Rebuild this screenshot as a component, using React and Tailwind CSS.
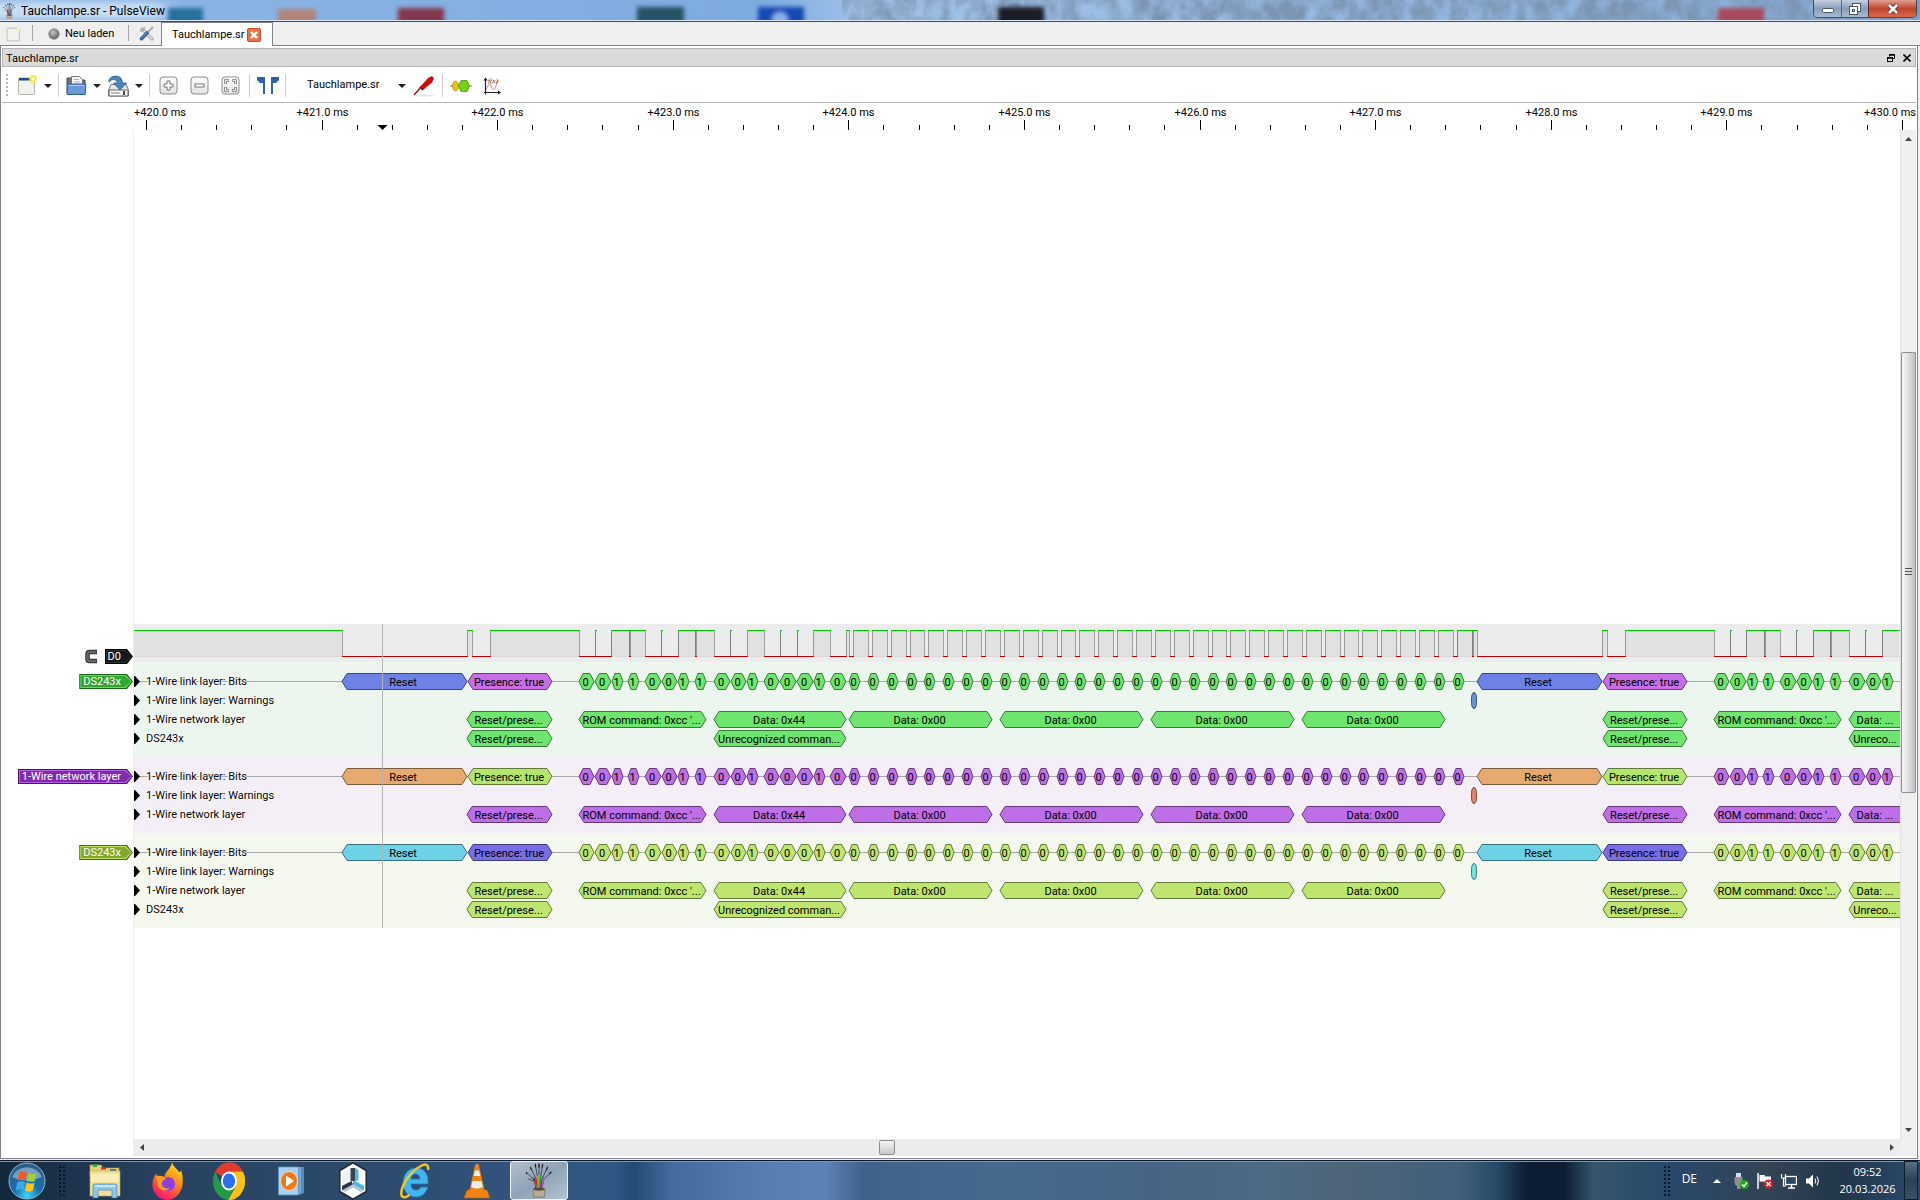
import React from "react";

/* ---------- capture data (pixels along the time axis, 0 = left edge of the view) ---------- */

const ZERO_BITS = Array.from({ length: 33 }, (_, k) => Math.round(715 + 18.87 * k));
const REPEAT = 1135;

const LEVELS = (() => {
  const packet = [
    [333, 338], [356, 445], [461, 462], [477, 495], [496, 511], [527, 528],
    [544, 561], [562, 580], [596, 597], [613, 630], [646, 647], [663, 664], [679, 696], [712, 715],
  ];
  const highs = [[0, 208], ...packet];
  ZERO_BITS.forEach((x, k) => highs.push([x + 4, k < 32 ? ZERO_BITS[k + 1] : 1338]));
  highs.push([1339, 1343]);
  packet.forEach(([a, b]) => {
    if (a + REPEAT < 1765) highs.push([a + REPEAT, Math.min(b + REPEAT, 1765)]);
  });
  return highs;
})();

const COMMAND_BITS = [
  [445, 460, "0"], [461, 477, "0"], [478, 489, "1"], [494, 505, "1"], [511, 527, "0"], [528, 543, "0"],
  [544, 555, "1"], [561, 572, "1"], [580, 596, "0"], [597, 612, "0"], [613, 624, "1"], [630, 645, "0"],
  [646, 662, "0"], [663, 679, "0"], [680, 691, "1"], [696, 712, "0"],
];

const BITS = [
  ...COMMAND_BITS,
  ...ZERO_BITS.map((x) => [x, x + 11, "0"]),
  ...COMMAND_BITS.slice(0, 11).map(([a, b, t]) => [a + REPEAT, b + REPEAT, t]),
];

const NETWORK = [
  [333, 418, "Reset/prese..."],
  [445, 572, "ROM command: 0xcc '..."],
  [580, 712, "Data: 0x44"],
  [715, 858, "Data: 0x00"],
  [866, 1009, "Data: 0x00"],
  [1017, 1160, "Data: 0x00"],
  [1168, 1311, "Data: 0x00"],
  [1469, 1553, "Reset/prese..."],
  [1580, 1707, "ROM command: 0xcc '..."],
  [1715, 1780, "Data: ...", 1741],
];

const DEVICE = [
  [333, 418, "Reset/prese..."],
  [580, 712, "Unrecognized comman..."],
  [1469, 1553, "Reset/prese..."],
  [1715, 1780, "Unreco...", 1741],
];

const DECODERS = [
  {
    name: "DS243x", band: "bg-[#edf6ee]", tagEdge: "bg-[#176317]", tagRim: "bg-[#5fe05f]", tagFill: "bg-[#30a530]",
    bits: ["#6ee66e", "#3a7a3a"], reset: ["#6e82e6", "#3a457a"], presence: ["#c86ee6", "#6a3a7a"], warning: ["#6496dc", "#35507a"], device: true,
  },
  {
    name: "1-Wire network layer", band: "bg-[#f4eef7]", tagEdge: "bg-[#4a1268]", tagRim: "bg-[#b860e6]", tagFill: "bg-[#832aac]",
    bits: ["#be6ee6", "#643a7a"], reset: ["#e6aa6e", "#7a5a3a"], presence: ["#b4e66e", "#607a3a"], warning: ["#e6826e", "#7a453a"], device: false,
  },
  {
    name: "DS243x", band: "bg-[#f5f8ee]", tagEdge: "bg-[#4c6414]", tagRim: "bg-[#c0e860]", tagFill: "bg-[#84a62e]",
    bits: ["#bee66e", "#647a3a"], reset: ["#6ed2e6", "#3a707a"], presence: ["#786ee6", "#403a7a"], warning: ["#6ee6dc", "#3a7a75"], device: true,
  },
];

/* ---------- trace view ---------- */

function Block({ a, b, text, colors, textX }) {
  const s = Math.min(5, (b - a) * 0.27);
  const pts = `${a},9.5 ${a + s},1.5 ${b - s},1.5 ${b},9.5 ${b - s},17.5 ${a + s},17.5`;
  return (
    <g>
      <polygon points={pts} fill={colors[0]} stroke={colors[1]} />
      {text && (
        <text x={textX ?? (a + b) / 2 - 1} y="14" textAnchor="middle" className="fill-black text-[11px]">{text}</text>
      )}
    </g>
  );
}

function Row({ label, children }) {
  return (
    <div className="grid h-[19px]">
      <svg className="col-start-1 row-start-1 h-[19px] w-full overflow-hidden" aria-hidden={!children}>
        {children}
        <polygon points="0,4 1,4 6,9.5 1,15 0,15" fill="#000" />
      </svg>
      <span className="z-10 col-start-1 row-start-1 justify-self-start pl-3 leading-[19px] [text-shadow:0_0_1px_#fff,0_0_2px_#fff,1px_0_1px_#fff,-1px_0_1px_#fff]">
        {label}
      </span>
    </div>
  );
}

function DecoderBand({ d }) {
  return (
    <section className={`pt-[10px] pb-[9px] ${d.band}`}>
      <Row label="1-Wire link layer: Bits">
        <line x1="0" x2="100%" y1="9.5" y2="9.5" stroke="#a8aaa8" />
        <Block a={208} b={333} text="Reset" colors={d.reset} textX={269} />
        <Block a={334} b={418} text="Presence: true" colors={d.presence} />
        {BITS.map(([a, b, t]) => <Block key={a} a={a} b={b} text={t} colors={d.bits} />)}
        <Block a={1343} b={1468} text="Reset" colors={d.reset} textX={1404} />
        <Block a={1469} b={1553} text="Presence: true" colors={d.presence} />
      </Row>
      <Row label="1-Wire link layer: Warnings">
        <rect x="1337.5" y="1.5" width="5" height="16" rx="2.5" ry="6" fill={d.warning[0]} stroke={d.warning[1]} />
      </Row>
      <Row label="1-Wire network layer">
        {NETWORK.map(([a, b, t, x]) => <Block key={a} a={a} b={b} text={t} textX={x} colors={d.bits} />)}
      </Row>
      {d.device && (
        <Row label="DS243x">
          {DEVICE.map(([a, b, t, x]) => <Block key={a} a={a} b={b} text={t} textX={x} colors={d.bits} />)}
        </Row>
      )}
    </section>
  );
}

function LogicTrace() {
  return (
    <svg className="block h-[38px] w-full bg-[#ececec]" aria-label="D0">
      <line x1="0" x2="100%" y1="32.5" y2="32.5" stroke="#d8d8d8" />
      {LEVELS.map(([a, b], i) => {
        const next = LEVELS[i + 1];
        const gap = next ? next[0] - b : 0;
        return (
          <g key={a}>
            {b - a > 1.5 && <rect x={a} y="7" width={b - a} height="25" fill="#e1e1e1" />}
            {next && <line x1={b} x2={next[0] + 1} y1="32.5" y2="32.5" stroke="#c00000" />}
            {a > 0 && <line x1={a + 0.5} x2={a + 0.5} y1="6" y2="32" stroke={gap <= 1 || b - a < 2 ? "#808080" : "#989898"} />}
            {b < 1765 && b - a > 1.5 && <line x1={b + 0.5} x2={b + 0.5} y1="6" y2="32" stroke={gap <= 1 ? "#808080" : "#a0a0a0"} />}
            <line x1={a} x2={b + 1} y1="6.5" y2="6.5" stroke="#00c800" />
          </g>
        );
      })}
    </svg>
  );
}

const tagShape = "[clip-path:polygon(0_0,calc(100%-6px)_0,100%_50%,calc(100%-6px)_100%,0_100%)]";

function Tag({ edge, rim, fill, children, pad = "pl-0.5 pr-[10px]" }) {
  return (
    <button className={`p-px ${edge} ${tagShape}`}>
      <span className={`block p-px ${rim} ${tagShape}`}>
        <span className={`block h-[11px] leading-[12px] text-white ${fill} ${pad} ${tagShape}`}>{children}</span>
      </span>
    </button>
  );
}

function TagColumn() {
  return (
    <div className="flex w-[132px] shrink-0 flex-col items-end border-r border-[#f0f0f0]">
      <div className="grow-[494] basis-0" />
      <div className="flex h-[38px] items-start gap-[7px] pt-[25px]">
        <svg className="h-[15px] w-[14px]" viewBox="0 0 14 15">
          <path d="M13 3H5.500Q3.500 3 3.500 5v5Q3.500 12 5.500 12H13" fill="none" stroke="#2c2c2c" strokeWidth="4.500" />
          <path d="M12.500 3H5.500Q3.500 3 3.500 5v5Q3.500 12 5.500 12H12.500" fill="none" stroke="#666" strokeWidth="2.500" />
        </svg>
        <Tag edge="bg-black" rim="bg-[#2a2f2f]" fill="bg-[#14181a]" pad="pl-px pr-[10px]">D0</Tag>
      </div>
      {DECODERS.map((d, i) => (
        <div key={i} className={`flex items-start pt-[12px] ${d.device ? "h-[95px]" : "h-[76px]"}`}>
          <Tag edge={d.tagEdge} rim={d.tagRim} fill={d.tagFill}>{d.name}</Tag>
        </div>
      ))}
      <div className="grow-[211] basis-0" />
      <div className="h-[17px]" />
    </div>
  );
}

function Ruler() {
  const majors = Array.from({ length: 11 }, (_, i) => i);
  return (
    <svg className="ml-[132px] block h-[27px] w-[calc(100%-132px)] shrink-0" aria-label="Time scale">
      {majors.map((i) => {
        const x = Math.round(11.9 + i * 175.6) + 0.5;
        const tx = i === 0 ? 26 : i === 10 ? 1756 : x;
        return (
          <g key={i}>
            <text x={tx} y="13" textAnchor="middle" className="fill-black text-[11px]">{`+${420 + i}.0 ms`}</text>
            <line x1={x} x2={x} y1="17" y2="27" stroke="#000" />
            {i < 10 && [1, 2, 3, 4].map((m) => {
              const mx = Math.round(11.9 + i * 175.6 + m * 35.12) + 0.5;
              return <line key={m} x1={mx} x2={mx} y1="22" y2="27" stroke="#000" />;
            })}
          </g>
        );
      })}
      <polygon points="243.500,22 253.500,22 248.500,27" fill="#000" />
    </svg>
  );
}

/* ---------- small controls ---------- */

const Caret = () => (
  <svg className="h-1 w-2" viewBox="0 0 8 4"><polygon points="0,0 8,0 4,4" fill="#222" /></svg>
);
const MenuArrow = ({ label }) => (
  <button aria-label={label} className="flex w-[14px] items-center justify-center"><Caret /></button>
);
const ToolButton = ({ label, width = "w-7", children }) => (
  <button aria-label={label} className={`flex items-center justify-center ${width}`}>{children}</button>
);
const Sep = () => <span className="mx-[3px] my-[5px] w-px bg-[#cfcfcf]" />;

function RoundedTool({ children }) {
  return (
    <svg className="h-[19px] w-[19px]" viewBox="0 0 19 19">
      <defs>
        <linearGradient id="btnface" x2="0" y2="1"><stop offset="0" stopColor="#fff" /><stop offset="1" stopColor="#e2e2de" /></linearGradient>
      </defs>
      <rect x="1" y="1" width="17" height="17" rx="3" fill="url(#btnface)" stroke="#8c8c88" />
      {children}
    </svg>
  );
}

function NewIcon({ className, faded }) {
  return (
    <svg className={className} viewBox="0 0 21 21">
      <rect x="1.500" y="3" width="16" height="16.500" rx="1" fill="#f1f1ee" stroke="#b4b4b0" />
      {!faded && <rect x="2" y="3" width="15" height="2.500" fill="#204a87" />}
      <circle cx="16" cy="4" r={faded ? 2.6 : 4} fill="#f6ea3a" opacity={faded ? 0.5 : 0.85} />
      <circle cx="16" cy="4" r="1.800" fill="#fffde0" />
    </svg>
  );
}

/* ---------- window chrome ---------- */

function TitleBar() {
  return (
    <header className="relative flex h-[22px] shrink-0 items-start justify-between overflow-hidden border-b border-[#404a60] bg-[#84b0e2]">
      <svg className="absolute inset-0 h-full w-full" preserveAspectRatio="none" viewBox="0 0 1920 21" aria-hidden>
        <defs>
          <filter id="soft" x="-20%" y="-50%" width="140%" height="200%"><feGaussianBlur stdDeviation="2" /></filter>
          <filter id="wide" x="-20%" y="-50%" width="140%" height="200%"><feGaussianBlur stdDeviation="10 3" /></filter>
          <filter id="ice" x="0" y="0" width="100%" height="100%">
            <feTurbulence type="fractalNoise" baseFrequency="0.06 0.045" numOctaves="3" seed="4" />
            <feColorMatrix values="0 0 0 0 0.2  0 0 0 0 0.3  0 0 0 0 0.45  2.2 0 0 0 -0.6" />
          </filter>
          <linearGradient id="sky"><stop offset="0" stopColor="#8db6e4" /><stop offset=".4" stopColor="#7eabe0" /><stop offset=".45" stopColor="#a2c2e8" /><stop offset="1" stopColor="#86acd8" /></linearGradient>
        </defs>
        <rect width="1920" height="21" fill="url(#sky)" />
        <rect x="842" width="1078" height="21" filter="url(#ice)" />
        <rect x="-20" y="2" width="185" height="17" fill="#d4e6f8" opacity=".85" filter="url(#wide)" />
        <g filter="url(#soft)">
          <rect x="168" y="8" width="35" height="16" fill="#25709c" />
          <rect x="278" y="9" width="38" height="16" fill="#b08478" />
          <rect x="398" y="8" width="46" height="18" fill="#84384e" />
          <rect x="637" y="7" width="47" height="18" fill="#265266" />
          <rect x="758" y="7" width="46" height="18" fill="#1548b4" />
          <circle cx="780" cy="20" r="8" fill="#8ab0e8" />
          <rect x="998" y="7" width="46" height="18" fill="#1a1e28" />
          <rect x="1718" y="8" width="46" height="18" fill="#a84a5c" />
        </g>
        <rect y="20" width="1920" height="1" fill="#d8e8f8" />
      </svg>
      <div className="relative flex h-[21px] items-center gap-[5px] pt-px pl-[3px] font-['Segoe_UI',Roboto,sans-serif] text-xs text-black">
        <CableIcon className="h-4 w-[13px]" />
        <h1>Tauchlampe.sr - PulseView</h1>
      </div>
      <div className="relative mr-[3px] flex h-[18px] overflow-hidden rounded-b-[5px] border border-t-0 border-[#3d4a60]">
        <button aria-label="Minimieren" className="flex w-7 items-center justify-center border-r border-[#5a6a82] bg-linear-to-b from-[#c3d0e0] via-[#8a9db8] to-[#a9bbd2] pt-1">
          <svg className="h-[5px] w-3" viewBox="0 0 12 5"><rect x=".5" y=".5" width="11" height="4" rx="1" fill="#fff" stroke="#4a5568" /></svg>
        </button>
        <button aria-label="Wiederherstellen" className="flex w-[27px] items-center justify-center border-r border-[#5a2a2a] bg-linear-to-b from-[#c3d0e0] via-[#8a9db8] to-[#a9bbd2]">
          <svg className="h-3 w-3" viewBox="0 0 12 12" fill="#fff" stroke="#4a5568"><rect x="3.500" y=".5" width="8" height="8" /><rect x=".5" y="3.500" width="8" height="8" /><rect x="3.500" y="6.500" width="2" height="2" /></svg>
        </button>
        <button aria-label="Schließen" className="flex w-[47px] items-center justify-center bg-linear-to-b from-[#e0a090] via-[#c0432c] to-[#d8694c]">
          <svg className="h-3 w-3" viewBox="0 0 12 12"><path d="M2 2l8 8M10 2l-8 8" stroke="#4a3038" strokeWidth="4.500" /><path d="M2 2l8 8M10 2l-8 8" stroke="#fff" strokeWidth="2.600" /></svg>
        </button>
      </div>
    </header>
  );
}

function TabBar() {
  return (
    <nav className="flex h-6 shrink-0 border-b border-[#83838f] bg-[#efefef]">
      <button aria-label="Neue Sitzung" className="flex w-7 items-center justify-center"><NewIcon faded className="h-4 w-4" /></button>
      <span className="mx-1 mt-[3px] mb-1 w-px bg-[#a6a6a6]" />
      <button className="flex w-[87px] items-center gap-[5px] pt-px pl-[11px]">
        <svg className="h-3 w-3" viewBox="0 0 12 12">
          <defs><radialGradient id="ball" cx=".4" cy=".35"><stop offset="0" stopColor="#c8c8c8" /><stop offset="1" stopColor="#777" /></radialGradient></defs>
          <circle cx="6" cy="6" r="5.300" fill="url(#ball)" stroke="#7a7a7a" strokeWidth=".6" />
        </svg>
        Neu laden
      </button>
      <span className="mx-1 mt-[3px] mb-1 w-px bg-[#a6a6a6]" />
      <button aria-label="Einstellungen" className="flex w-7 items-center justify-center">
        <svg className="h-[15px] w-4" viewBox="0 0 16 15">
          <path d="M3 3L13 13" stroke="#8a8f94" strokeWidth="3" strokeLinecap="round" /><path d="M3 3L13 13" stroke="#e6e8ea" strokeWidth="1.600" strokeLinecap="round" />
          <path d="M1 4.500A3 3 0 0 0 5 1" fill="none" stroke="#a0a4a8" strokeWidth="1.600" />
          <path d="M14 1L7.500 7.500" stroke="#a8acb0" strokeWidth="1.800" /><path d="M8 7L2.500 12.700" stroke="#3465a4" strokeWidth="3.600" strokeLinecap="round" /><path d="M7.500 7L2.700 12" stroke="#729fcf" strokeLinecap="round" />
        </svg>
      </button>
      <div className="-mb-px flex items-center gap-[5px] border-x border-t border-[#83838f] bg-white pr-[11px] pl-[10px]">
        <button className="pt-[2px]">Tauchlampe.sr</button>
        <button aria-label="Tab schließen" className="-ml-[2px] flex h-[14px] w-[14px] items-center justify-center rounded-[2px] border border-[#d8432a] bg-[#e2764e]">
          <svg className="h-2 w-2" viewBox="0 0 8 8"><path d="M1 1l6 6M7 1l-6 6" stroke="#fff" strokeWidth="2.400" /></svg>
        </button>
      </div>
    </nav>
  );
}

function Toolbar() {
  return (
    <div role="toolbar" className="flex h-9 shrink-0 items-stretch border-b border-[#b4b4b4] pt-[2px]">
      <span className="my-[5px] ml-[4px] mr-[6px] w-[2px] bg-[repeating-linear-gradient(to_bottom,#b8b8b8_0_2px,transparent_2px_4px)]" />
      <ToolButton label="Neue Ansicht" width="w-[27px]"><NewIcon className="h-[21px] w-[21px]" /></ToolButton>
      <MenuArrow label="Ansicht wählen" />
      <Sep />
      <ToolButton label="Öffnen">
        <svg className="h-[21px] w-[21px]" viewBox="0 0 21 21">
          <path d="M1 18V3h5l1 2h12v13z" fill="#6c7076" stroke="#4c5056" />
          <path d="M5.500 11V1.500h8l3 3V11z" fill="#f4f4f4" stroke="#77797c" /><path d="M8 4.500h5M8 7h6" stroke="#aaa" />
          <path d="M1 19.500L1.800 9h18l-.6 10.500z" fill="#6a9bd4" stroke="#2f609f" /><path d="M2.500 10.500h16" stroke="#a9c8ea" />
        </svg>
      </ToolButton>
      <MenuArrow label="Zuletzt geöffnet" />
      <ToolButton label="Speichern">
        <svg className="h-[22px] w-[23px]" viewBox="0 0 23 22">
          <path d="M1.500 15L4 9.500h15l2.500 5.500v6H1.500z" fill="#e6e6e4" stroke="#777" /><rect x="2" y="15" width="19" height="6" rx="1" fill="#f6f6f5" stroke="#666" />
          <path d="M4 18h9" stroke="#aaa" strokeWidth="1.500" /><path d="M17 16v4" stroke="#111" strokeWidth="1.500" />
          <path d="M2 4.500Q4 1 9 1q6 0 6.500 7h4L13 15 6.500 8h4Q10 4.500 6.500 4.500 4 4.500 2 7z" fill="#4a86b8" stroke="#2c6391" strokeWidth=".8" />
        </svg>
      </ToolButton>
      <MenuArrow label="Speichern unter" />
      <Sep />
      <ToolButton label="Vergrößern" width="w-[31px]">
        <RoundedTool><path d="M8 5h3v3h3v3h-3v3H8v-3H5V8h3z" fill="#fff" stroke="#777" /></RoundedTool>
      </ToolButton>
      <ToolButton label="Verkleinern" width="w-[31px]">
        <RoundedTool><rect x="5" y="8" width="9" height="3" fill="#fff" stroke="#777" /></RoundedTool>
      </ToolButton>
      <ToolButton label="Einpassen" width="w-[31px]">
        <RoundedTool><path d="M4.500 8V4.500H8M11 4.500h3.500V8M14.500 11v3.500H11M8 14.500H4.500V11" fill="none" stroke="#777" strokeWidth="2.600" /><path d="M4.500 7.500V4.500H7.500M11.500 4.500h3V7.500M14.500 11.500v3H11.500M7.500 14.500H4.500V11.500" fill="none" stroke="#fff" strokeWidth=".9" /></RoundedTool>
      </ToolButton>
      <Sep />
      <ToolButton label="Cursor anzeigen" width="w-[29px]">
        <svg className="h-[19px] w-[22px]" viewBox="0 0 22 19"><path d="M0 1h8v17H6V7H3L0 4zM22 1h-8v17h2V7h3l3-3z" fill="#2f62a8" /></svg>
      </ToolButton>
      <Sep />
      <div className="grid w-[120px]">
        <select aria-label="Gerät" className="col-start-1 row-start-1 appearance-none bg-transparent pl-[18px] text-[11px]"><option>Tauchlampe.sr</option></select>
        <span className="pointer-events-none col-start-1 row-start-1 self-center justify-self-end pr-[3px] leading-none"><Caret /></span>
      </div>
      <ToolButton label="Kanäle" width="w-[30px]">
        <svg className="h-[22px] w-[22px]" viewBox="0 0 22 22">
          <ellipse cx="11" cy="20.500" rx="10" ry="1.200" fill="#e4e4e4" />
          <path d="M1 20L9 11" stroke="#a01818" strokeWidth="1.500" /><path d="M7 12L15 3l4-2 2 2.500-2 4L10 15z" fill="#cc1010" /><path d="M7 12l3 3" stroke="#7a0808" strokeWidth="1.500" />
        </svg>
      </ToolButton>
      <Sep />
      <ToolButton label="Protokolldecoder" width="w-[30px]">
        <svg className="h-[14px] w-[22px]" viewBox="0 0 22 14">
          <path d="M0 7h22" stroke="#777" /><ellipse cx="5.500" cy="7" rx="3" ry="5" fill="#edc10c" stroke="#a88808" strokeWidth=".7" />
          <path d="M8.500 7l2.500-5.500h6L19.500 7 17 12.500h-6z" fill="#73d216" stroke="#4e9a06" strokeWidth=".8" />
        </svg>
      </ToolButton>
      <ToolButton label="Mathematisches Signal" width="w-8">
        <svg className="h-[18px] w-[18px]" viewBox="0 0 18 18">
          <path d="M2.500 17.500V2M1 15.500h15.500" stroke="#222" strokeWidth="1.200" fill="none" /><path d="M.5 3.500l2-3 2 3zM15 13.500l3 2-3 2z" fill="#111" />
          <path d="M3 13c2-6 4-7 5.500-3s3 3 4.500-1 1.500-5 3-5.500" fill="none" stroke="#e88080" />
          <text x="5" y="6" className="fill-[#222] font-['Liberation_Serif',serif] text-[7px] italic">f(x)</text>
        </svg>
      </ToolButton>
    </div>
  );
}

function ScrollArrow({ points, label, className }) {
  return (
    <button aria-label={label} className={`flex shrink-0 items-center justify-center ${className}`}>
      <svg className="h-[7px] w-[7px]" viewBox="0 0 7 7"><polygon points={points} fill="#444" /></svg>
    </button>
  );
}

/* ---------- taskbar ---------- */

function CableIcon({ className }) {
  return (
    <svg className={className} viewBox="0 0 30 38">
      {[["#222", "M12 28L10 18L1 10"], ["#d22", "M13 28L12 18L6 5"], ["#e8842a", "M14 28L13.500 16L11 2"], ["#e0c020", "M15 28V15L15 1"], ["#2a2", "M16 28L16.500 16L19 2"], ["#26c", "M17 28L18 18L24 5"], ["#c3c", "M18 28L20 18L28 10"], ["#777", "M13 28L10 20L3 17"]].map(([c, d]) => (
        <g key={d} fill="none"><path d={d} stroke="#2c2c34" strokeWidth=".8" /><path d={d} stroke={c} strokeWidth="1.300" pathLength="10" strokeDasharray="5.500 4.500" /></g>
      ))}
      <path d="M2 12l-1-2M7 8L5.500 4M11.300 5L11 1M15 5V.5M18.500 5l.5-4M23 8l1.500-4M26 12l2.500-2.500" stroke="#26262c" strokeWidth="1.400" />
      <path d="M8.500 28h13l-.6 9H9z" fill="#b9ac94" stroke="#85796a" /><ellipse cx="15" cy="28.500" rx="6" ry="1.500" fill="#554d42" />
    </svg>
  );
}

const ICONS = {
  Explorer: (
    <svg className="h-[35px] w-8" viewBox="0 0 32 35">
      <path d="M1 5V2h11l2 3h16v9H1z" fill="#e8cf78" stroke="#b89a40" strokeWidth=".6" /><rect x="4" y="1.500" width="4" height="2.500" fill="#28b040" /><rect x="12" y="4" width="5" height="2.500" fill="#d03028" /><rect x="21" y="6" width="6" height="2.500" fill="#3a7ad0" />
      <path d="M1 8h30v25H1z" fill="#f4df98" stroke="#c8aa58" strokeWidth=".6" /><path d="M2 11h28v8H2z" fill="#fbedb8" />
      <path d="M4 35V23q0-2 2-2h20q2 0 2 2v12h-5v-8H9v8z" fill="#8cc8ea" stroke="#4b93c2" strokeWidth=".8" /><path d="M6 23h20" stroke="#d9f1fc" strokeWidth="1.500" />
    </svg>
  ),
  Firefox: (
    <svg className="h-[38px] w-[31px]" viewBox="0 0 31 38">
      <defs><linearGradient id="fx" x1=".8" y1="0" x2=".3" y2="1"><stop offset="0" stopColor="#ffe226" /><stop offset=".45" stopColor="#ff8a16" /><stop offset=".8" stopColor="#ff3750" /><stop offset="1" stopColor="#e31587" /></linearGradient></defs>
      <path d="M20 0c1 5 5 6 7 10 2-0 2-2 2-2 2 5 2 10 1.500 15C29 32 22 38 15 38S1 32 .5 24c-.3-5 1-9 4-13 0 2 0 3 1 4 2-1 5-1 7 0C13 9 19 7 20 0z" fill="url(#fx)" />
      <circle cx="16" cy="22" r="7" fill="#8b3ee8" /><path d="M4 14c4-1 8 0 10 3-3 1-5 3-4 6 1 3 5 4 8 3-3 4-10 3-12-2-1-3-1-7-2-10z" fill="#ff9a1e" />
    </svg>
  ),
  Chrome: (
    <svg className="h-[38px] w-8" viewBox="0 0 32 38" preserveAspectRatio="none">
      <path d="M16 19L2.100 10A16 19 0 0 1 29.900 9.500H16z" fill="#e33b2e" /><path d="M16 9.500h13.900A16 19 0 0 1 15 38L23 24z" fill="#fbc116" /><path d="M2.100 9.500L9 24 16 28.500 22 25 15 38A16 19 0 0 1 2.100 9.500z" fill="#229b49" />
      <ellipse cx="16" cy="19" rx="8" ry="9.500" fill="#fff" /><ellipse cx="16" cy="19" rx="6.200" ry="7.400" fill="#2b6ff0" />
    </svg>
  ),
  "Media Player": (
    <svg className="h-[30px] w-[27px]" viewBox="0 0 27 30">
      <path d="M6 1h20v26l-5 2z" fill="#4d8fc6" /><path d="M3 1h20v27H3z" fill="#6ca9da" /><rect x=".5" y="1" width="20" height="28" rx="1" fill="#a6d0ee" stroke="#5c98c8" strokeWidth=".8" />
      <ellipse cx="11" cy="15" rx="8.500" ry="9.500" fill="#f07818" stroke="#fbd9b4" /><path d="M8 9.500v11l8-5.500z" fill="#fff" />
    </svg>
  ),
  Cube: (
    <svg className="h-[38px] w-7" viewBox="0 0 28 38">
      <path d="M14 .8L27.200 8.500v21L14 37.200.8 29.500v-21z" fill="#fff" stroke="#222a33" strokeWidth="1.500" />
      <path d="M12 5v14L3 25V14z" fill="#eef1f4" /><path d="M11.500 6h5v13h-5z" fill="#3a444f" /><path d="M16.500 6l3 2v10l-3 1z" fill="#48b8e0" />
      <path d="M12.500 19L3 24v4.500L14 22.500z" fill="#2b3440" /><path d="M14 22.500l11 6V24l-9-5h-2z" fill="#48b8e0" /><path d="M14 22.500l11 6-3 1.500-8-4.500-8 4.500-3-1.500z" fill="#b8c4ce" />
    </svg>
  ),
  "Internet Explorer": (
    <svg className="h-9 w-[30px]" viewBox="0 0 30 36">
      <path d="M28 21H11c0 4 2 6 5 6 2 0 4-1 5-3h7c-2 6-6 10-12 10C8 34 3 28 3 20S8 5 16 5s13 6 12 16zM11 16h9c0-3-2-5-4.500-5S11 13 11 16z" fill="#42b5ee" stroke="#1a7fc4" strokeWidth=".8" />
      <path d="M28 7c1-5-2-7-7-4C11 8 0 23 1.500 32c1 4 5 2 8 0" fill="none" stroke="#f6c51c" strokeWidth="2.500" />
    </svg>
  ),
  VLC: (
    <svg className="h-9 w-[26px]" viewBox="0 0 26 36">
      <path d="M3 27h20l3 8H0z" fill="#f08210" stroke="#b85c04" strokeWidth=".6" /><path d="M13 .5q1.500 0 2 2L21 29q-8 4-16 0L11 2.500q.5-2 2-2z" fill="#f08210" />
      <path d="M11 7.500h4l1.300 5.500H9.700zM8.500 18h9l1.300 6q-6 3-11.600 0z" fill="#ececec" />
    </svg>
  ),
};

const Grip = () => (
  <span className="my-[4px] w-2 bg-[radial-gradient(#0c1826_1px,transparent_1.5px)] bg-[size:4px_4px]" />
);

function Taskbar() {
  return (
    <footer className="flex h-10 shrink-0 border-t border-[#0e1a2a] bg-[linear-gradient(to_right,#14283c_0%,#27425f_8%,#2c4b6e_20%,#33557f_28%,#2f5884_32%,#234a72_33%,#446b9e_35%,#587eb2_40%,#5c82b6_43%,#3f628a_45%,#456a8e_52%,#466585_60%,#4c6a84_66%,#4e6478_70%,#40607c_76%,#274866_78%,#0d1e34_79.500%,#0d1e34_81.500%,#35566c_83%,#27486a_87%,#334455_92%,#22364a_96%,#2a4a6c_100%)] text-white shadow-[inset_0_1px_0_#7e93aa]">
      <button aria-label="Start" className="flex w-[54px] items-center justify-center">
        <svg className="h-[38px] w-[38px]" viewBox="0 0 38 38">
          <defs><radialGradient id="orb" cx=".5" cy=".9" r=".9"><stop offset="0" stopColor="#38d8ff" /><stop offset=".4" stopColor="#1670ac" /><stop offset="1" stopColor="#2e5c86" /></radialGradient></defs>
          <circle cx="19" cy="19" r="18" fill="url(#orb)" stroke="#8fb4cc" />
          <path d="M4 15A16 15 0 0 1 34 15Q19 22 4 15z" fill="#b8d0e2" opacity=".55" />
          <path d="M11 11q4-2.500 8-.5l-1.500 8q-4-2-8 .3z" fill="#f0582a" /><path d="M20.500 11q4 2 8 0l-1.700 8q-4 1.800-8-.2z" fill="#9bd03c" />
          <path d="M9.200 20.500q4-2.300 8-.3l-1.500 8q-4-2-8 .5z" fill="#3ea8ec" /><path d="M18.500 20.500q4 2 8 .2l-1.700 8q-4 2-7.800-.2z" fill="#fcc620" />
        </svg>
      </button>
      <span className="flex w-5 justify-center pr-1"><Grip /></span>
      {Object.entries(ICONS).map(([name, icon]) => (
        <button key={name} aria-label={name} className="flex w-[62px] items-center justify-center">{icon}</button>
      ))}
      <button aria-label="PulseView" className="mx-[2px] flex w-[58px] items-center justify-center rounded-[3px] border border-[#eef4fa] bg-linear-to-br from-[#b4bfcb] via-[#8fa3b8] to-[#b2c2d2]">
        <CableIcon className="h-[35px] w-[30px]" />
      </button>
      <div className="ml-auto flex font-['Segoe_UI','Open_Sans',sans-serif]">
        <Grip />
        <span className="self-center pr-4 pb-[4px] pl-[11px] text-xs">DE</span>
        <button aria-label="Ausgeblendete Symbole" className="flex items-center pr-[12px]"><svg className="h-1 w-2" viewBox="0 0 8 4"><polygon points="0,4 8,4 4,0" fill="#fff" /></svg></button>
        <div className="flex items-center gap-2">
          <svg className="h-4 w-4" viewBox="0 0 16 16"><path d="M3 0h5v4H3z" fill="#ddd" /><path d="M1.500 4h8v5q0 3-2 4v3H4v-3q-2.500-1-2.500-4z" fill="#8b8f92" /><circle cx="11.500" cy="11.500" r="4.500" fill="#22a81c" /><path d="M9 11.500l2 2 3-4" fill="none" stroke="#fff" strokeWidth="1.300" /></svg>
          <svg className="h-4 w-4" viewBox="0 0 16 16"><path d="M1 0v16" stroke="#fff" strokeWidth="1.500" /><path d="M2.500 2h5l1 1.500H14V10H8L7 8.500H2.500z" fill="#fff" /><circle cx="11.500" cy="11" r="4.500" fill="#d82020" /><path d="M9.500 9l4 4M13.500 9l-4 4" stroke="#fff" strokeWidth="1.400" /></svg>
          <svg className="h-4 w-4" viewBox="0 0 16 16"><rect x="4.500" y="3.500" width="11" height="8" fill="#2a4560" stroke="#fff" strokeWidth="1.300" /><path d="M7 15h7M10.500 12v3" stroke="#fff" strokeWidth="1.400" /><path d="M.5 1v4h4V1M2.500 5v8H5" fill="none" stroke="#fff" strokeWidth="1.200" /></svg>
          <svg className="h-4 w-4" viewBox="0 0 16 16"><path d="M1 5.500h3l4-4v13l-4-4H1z" fill="#fff" /><path d="M10 5.500q1.500 2.500 0 5M12 3.500q3 4.500 0 9" fill="none" stroke="#fff" /></svg>
        </div>
        <time className="flex w-[81px] flex-col items-center justify-center pb-px pl-3 text-[11px] leading-[17px]"><span>09:52</span><span>20.03.2026</span></time>
        <button aria-label="Desktop anzeigen" className="mx-[2px] w-[14px] border border-[#0f1d2c] bg-linear-to-b from-[#5c6f84] via-[#2c4156] to-[#3a5068]" />
      </div>
    </footer>
  );
}

export default function App() {
  return (
    <div className="flex h-screen flex-col overflow-hidden bg-[#efefef] font-[Tahoma,Roboto,sans-serif] text-[11px] text-black">
      <TitleBar />
      <TabBar />
      <main className="mr-[2px] mb-px flex min-h-0 grow flex-col border-r border-b border-l border-[#83838f] bg-white pt-[2px] pr-px pb-[2px] pl-px">
        <div className="flex h-[19px] shrink-0 items-center justify-between border border-[#b4b4b4] bg-[#dadada] pr-1 pl-[3px]">
          <h2 className="pt-[3px]">Tauchlampe.sr</h2>
          <div className="flex gap-2">
            <button aria-label="Abdocken"><svg className="h-2 w-2" viewBox="0 0 8 8" fill="none" stroke="#000"><path d="M2.500 2.500v-2h5v4h-2" /><path d="M2 1h6M0 4h6" strokeWidth="1.500" /><rect x=".5" y="3.500" width="5" height="4" /></svg></button>
            <button aria-label="Schließen"><svg className="h-2 w-2" viewBox="0 0 8 8"><path d="M.5 .5l7 7M7.500 .5l-7 7" stroke="#000" strokeWidth="1.600" /></svg></button>
          </div>
        </div>
        <Toolbar />
        <Ruler />
        <div className="flex min-h-0 grow">
          <TagColumn />
          <div className="flex min-w-0 grow flex-col">
            <div className="flex min-h-0 grow">
              <div id="view" className="flex min-w-0 grow flex-col">
                <div className="grow-[494] basis-0" />
                <div className="relative">
                  <LogicTrace />
                  {DECODERS.map((d, i) => <DecoderBand key={i} d={d} />)}
                  <span className="absolute inset-y-0 left-[248px] z-20 w-px bg-[#b4b4b4]" />
                </div>
                <div className="grow-[211] basis-0" />
              </div>
              <div role="scrollbar" aria-label="Vertikal" aria-valuenow="40" aria-controls="view" className="flex w-4 shrink-0 flex-col border-l border-[#e2e2e2] bg-[#efefef]">
                <ScrollArrow label="Nach oben" points="3.500,2 7,6 0,6" className="h-[17px]" />
                <div className="grow-[205] basis-0" />
                <div className="flex grow-[440] basis-0 items-center justify-center rounded-[2px] border border-[#8e8e8e] bg-linear-to-r from-[#f6f6f6] via-[#dedee0] to-[#c0c1c6]">
                  <svg className="h-2 w-[7px]" viewBox="0 0 7 8"><path d="M0 .5h7M0 3.500h7M0 6.500h7" stroke="#555" /></svg>
                </div>
                <div className="grow-[330] basis-0" />
                <ScrollArrow label="Nach unten" points="0,1 7,1 3.500,5" className="h-[17px]" />
              </div>
            </div>
            <div className="flex h-[17px] shrink-0 bg-[#ececec]">
              <ScrollArrow label="Nach links" points="5,0 5,7 1,3.500" className="w-[17px]" />
              <div className="grow-[728] basis-0" />
              <div role="scrollbar" aria-label="Horizontal" aria-valuenow="42" aria-controls="view" className="my-px w-4 rounded-[2px] border border-[#8e8e8e] bg-linear-to-b from-[#f4f4f4] to-[#c9c9cc]" />
              <div className="grow-[987] basis-0" />
              <ScrollArrow label="Nach rechts" points="2,0 6,3.500 2,7" className="w-[17px]" />
              <div className="w-4 bg-[#efefef]" />
            </div>
          </div>
        </div>
      </main>
      <Taskbar />
    </div>
  );
}
